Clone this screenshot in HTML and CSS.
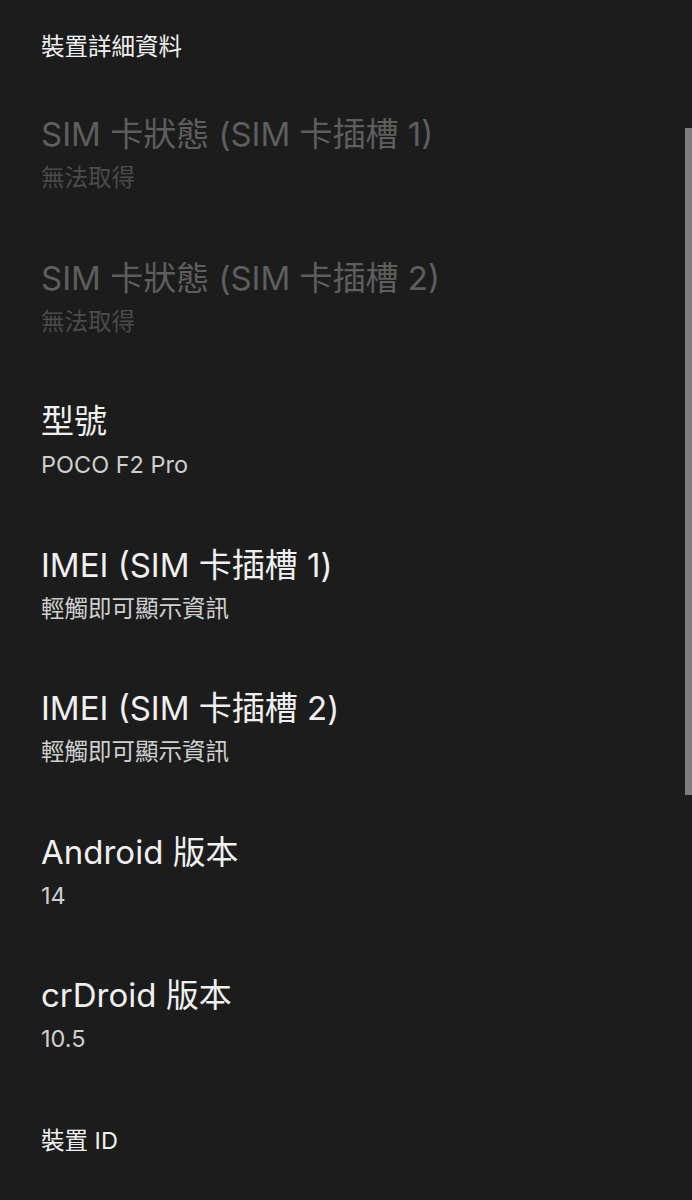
FILE: index.html
```html
<!DOCTYPE html>
<html lang="zh-Hant">
<head>
<meta charset="utf-8">
<title>裝置詳細資料</title>
<link rel="stylesheet" href="styles.css">
</head>
<body>
<div class="screen">
  <div class="category">裝置詳細資料</div>
  <div class="list">
    <div class="pref disabled">
      <div class="title">SIM 卡狀態 (SIM 卡插槽 1)</div>
      <div class="summary">無法取得</div>
    </div>
    <div class="pref disabled">
      <div class="title">SIM 卡狀態 (SIM 卡插槽 2)</div>
      <div class="summary">無法取得</div>
    </div>
    <div class="pref">
      <div class="title">型號</div>
      <div class="summary">POCO F2 Pro</div>
    </div>
    <div class="pref">
      <div class="title">IMEI (SIM 卡插槽 1)</div>
      <div class="summary">輕觸即可顯示資訊</div>
    </div>
    <div class="pref">
      <div class="title">IMEI (SIM 卡插槽 2)</div>
      <div class="summary">輕觸即可顯示資訊</div>
    </div>
    <div class="pref">
      <div class="title">Android 版本</div>
      <div class="summary">14</div>
    </div>
    <div class="pref">
      <div class="title">crDroid 版本</div>
      <div class="summary">10.5</div>
    </div>
  </div>
  <div class="category category-bottom">裝置 ID</div>
  <div class="scrollbar"></div>
</div>
</body>
</html>
```
FILE: styles.css
```css
html, body {
  margin: 0;
  padding: 0;
  background: #1c1c1c;
}

body {
  font-family: "Inter", "Noto Sans CJK TC", sans-serif;
  color: #f0f0f0;
}

.screen {
  position: relative;
  width: 692px;
  height: 1200px;
  overflow: hidden;
  padding-left: 41px;
  box-sizing: border-box;
}

.category {
  font-size: 23.5px;
  line-height: 32px;
  color: #f0f0f0;
  margin-top: 31px;
}

.category-bottom {
  margin-top: 38.5px;
}

.list {
  display: flex;
  flex-direction: column;
  margin-top: 19px;
}

.pref {
  display: flex;
  flex-direction: column;
  gap: 8px;
  padding: 32px 0 31.5px;
}

.title {
  font-size: 33px;
  line-height: 40px;
  color: #f0f0f0;
  white-space: nowrap;
}

.summary {
  font-size: 23.5px;
  line-height: 32px;
  color: #cfcfcf;
  white-space: nowrap;
}

.pref.disabled .title {
  color: #5e5e5e;
}

.pref.disabled .summary {
  color: #4b4b4b;
}

.scrollbar {
  position: absolute;
  right: 0;
  top: 128px;
  width: 7px;
  height: 667px;
  background: #7d7d7d;
}
```
